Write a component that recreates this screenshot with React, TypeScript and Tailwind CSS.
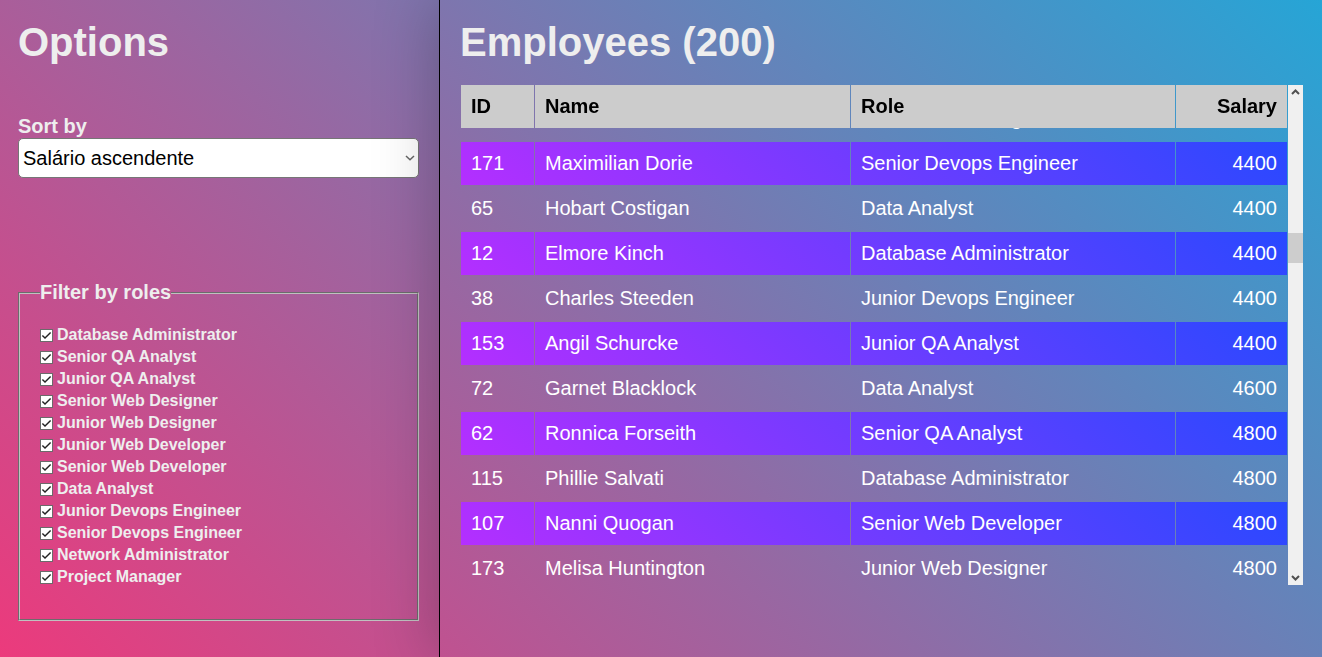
import { useLayoutEffect, useRef, useState } from 'react';

const ROLES = [
  'Database Administrator',
  'Senior QA Analyst',
  'Junior QA Analyst',
  'Senior Web Designer',
  'Junior Web Designer',
  'Junior Web Developer',
  'Senior Web Developer',
  'Data Analyst',
  'Junior Devops Engineer',
  'Senior Devops Engineer',
  'Network Administrator',
  'Project Manager',
];

type Employee = { id: number | null; name: string; role: string; salary: number | null };

const EMPLOYEES: Employee[] = [
  { id: null, name: '', role: 'Senior Web Designer', salary: null },
  { id: 171, name: 'Maximilian Dorie', role: 'Senior Devops Engineer', salary: 4400 },
  { id: 65, name: 'Hobart Costigan', role: 'Data Analyst', salary: 4400 },
  { id: 12, name: 'Elmore Kinch', role: 'Database Administrator', salary: 4400 },
  { id: 38, name: 'Charles Steeden', role: 'Junior Devops Engineer', salary: 4400 },
  { id: 153, name: 'Angil Schurcke', role: 'Junior QA Analyst', salary: 4400 },
  { id: 72, name: 'Garnet Blacklock', role: 'Data Analyst', salary: 4600 },
  { id: 62, name: 'Ronnica Forseith', role: 'Senior QA Analyst', salary: 4800 },
  { id: 115, name: 'Phillie Salvati', role: 'Database Administrator', salary: 4800 },
  { id: 107, name: 'Nanni Quogan', role: 'Senior Web Developer', salary: 4800 },
  { id: 173, name: 'Melisa Huntington', role: 'Junior Web Designer', salary: 4800 },
];

function RoleFilter({ role }: { role: string }) {
  const [checked, setChecked] = useState(true);
  return (
    <label className="flex h-[22px] items-center gap-1 text-base font-bold leading-[22px]">
      <span className="grid size-[13px] shrink-0">
        <input
          type="checkbox"
          checked={checked}
          onChange={() => setChecked(!checked)}
          className="peer col-start-1 row-start-1 size-[13px] appearance-none border border-[#6b6b6b] bg-white"
        />
        <svg
          viewBox="0 0 13 13"
          className="pointer-events-none invisible col-start-1 row-start-1 size-[13px] peer-checked:visible"
          fill="none"
          stroke="#222"
          strokeWidth="1.4"
        >
          <path d="M2.4 6.4 5 9 10.6 3.4" />
        </svg>
      </span>
      {role}
    </label>
  );
}

function Options() {
  return (
    <aside className="w-[439px] shrink-0 pl-[18px] pr-5 pt-[18px] text-[#eee]">
      <h1 className="text-[40px] font-bold leading-[48px]">Options</h1>
      <div className="mt-12 flex flex-col">
        <label htmlFor="sort" className="text-xl font-bold leading-6">
          Sort by
        </label>
        <div className="grid items-center">
          <select
            id="sort"
            defaultValue="asc"
            className="col-start-1 row-start-1 h-10 w-full appearance-none rounded-[5px] border border-[#767676] bg-white pl-1 text-xl text-black"
          >
            <option value="asc">Salário ascendente</option>
            <option value="desc">Salário descendente</option>
          </select>
          <svg
            viewBox="0 0 10 6"
            className="pointer-events-none col-start-1 row-start-1 mr-1 h-[6px] w-[10px] justify-self-end"
            fill="none"
            stroke="#666"
            strokeWidth="1.5"
          >
            <path d="M1 1 5 4.8 9 1" />
          </svg>
        </div>
      </div>
      <fieldset className="mt-[103px] border-2 border-[#c0c0c0] px-5 pb-[31px] pt-5 [border-style:groove]">
        <legend className="text-xl font-bold leading-[23px]">Filter by roles</legend>
        {ROLES.map((role) => (
          <RoleFilter key={role} role={role} />
        ))}
      </fieldset>
    </aside>
  );
}

function ScrollBar() {
  return (
    <div className="flex w-[15px] shrink-0 flex-col items-center bg-[#f0f0f0]" aria-hidden="true">
      <svg viewBox="0 0 15 15" className="size-[15px]" fill="none" stroke="#505050" strokeWidth="2">
        <path d="M4 9 7.5 5.5 11 9" />
      </svg>
      <div className="mt-[133px] h-[30px] w-full bg-[#cdcdcd]" />
      <svg viewBox="0 0 15 15" className="mt-auto size-[15px]" fill="none" stroke="#505050" strokeWidth="2">
        <path d="M4 6 7.5 9.5 11 6" />
      </svg>
    </div>
  );
}

function Employees() {
  const scroller = useRef<HTMLDivElement>(null);
  useLayoutEffect(() => {
    if (scroller.current) scroller.current.scrollTop = 35;
  }, []);

  return (
    <main className="relative min-w-0 flex-1 border-l border-black pb-[72px] pl-5 pr-[19px] pt-[18px] shadow-[0_0_60px_rgba(0,0,0,0.25)]">
      <h1 className="text-[40px] font-bold leading-[48px] text-[#eee]">Employees (200)</h1>
      <div className="mt-[19px] flex h-[500px]">
        <div ref={scroller} className="min-w-0 flex-1 overflow-y-auto [scrollbar-width:none]">
          <table className="w-full table-fixed border-separate border-spacing-x-px border-spacing-y-[2px] text-xl leading-[23px] text-white">
            <colgroup>
              <col className="w-[73px]" />
              <col className="w-[315px]" />
              <col />
              <col className="w-[111px]" />
            </colgroup>
            <thead className="sticky top-0 text-left text-black">
              <tr>
                <th className="bg-[#ccc] p-[10px]">ID</th>
                <th className="bg-[#ccc] p-[10px]">Name</th>
                <th className="bg-[#ccc] p-[10px]">Role</th>
                <th className="bg-[#ccc] p-[10px] text-right">Salary</th>
              </tr>
            </thead>
            <tbody>
              {EMPLOYEES.map((e, i) => (
                <tr key={i} className="even:bg-[linear-gradient(45deg,#b42fff,#2849ff)]">
                  <td className="h-[43px] px-[10px] py-[10px]">{e.id}</td>
                  <td className="px-[10px] py-[10px]">{e.name}</td>
                  <td className="px-[10px] py-[10px]">{e.role}</td>
                  <td className="px-[10px] py-[10px] text-right">{e.salary}</td>
                </tr>
              ))}
            </tbody>
          </table>
        </div>
        <ScrollBar />
      </div>
    </main>
  );
}

export default function App() {
  return (
    <div className="flex min-h-screen bg-[linear-gradient(45deg,#ec3a7c,#26a5d6)] font-['Liberation_Sans',Arial,sans-serif]">
      <Options />
      <Employees />
    </div>
  );
}
